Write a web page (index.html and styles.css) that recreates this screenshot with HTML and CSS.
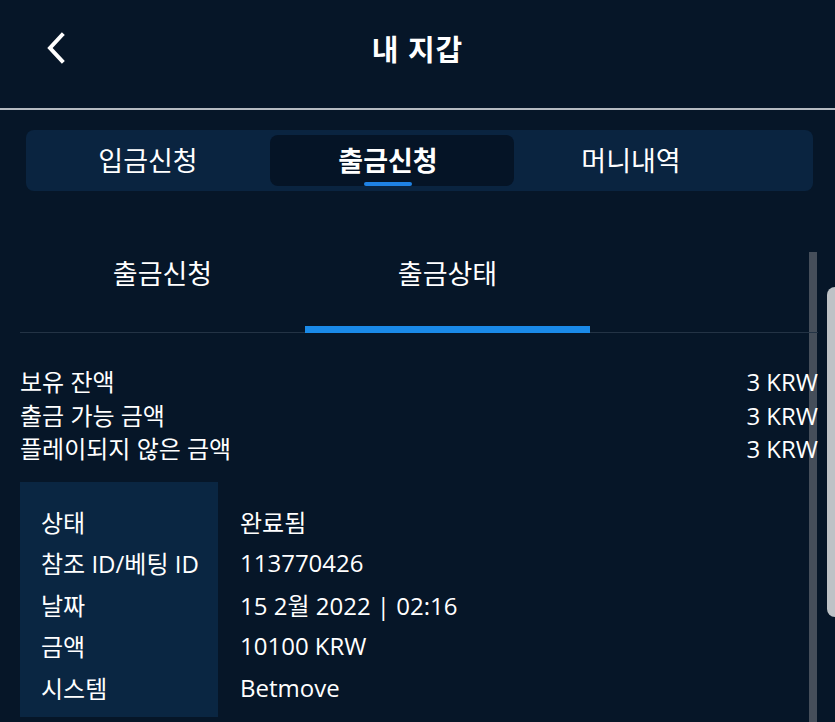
FILE: index.html
```html
<!DOCTYPE html><html><head>
    <meta name="viewport" content="width=device-width, initial-scale=1">
    <title>내 지갑</title>
    <link rel="stylesheet" href="styles.css">
  </head><body>
    <div class="header">
      <a class="back" href="#"><svg width="24" height="32" viewBox="0 0 24 32"><polyline points="18,3 6,16 18,29" fill="none" stroke="#fff" stroke-width="4" stroke-linecap="square"/></svg></a>
      <h1>내 지갑</h1>
    </div>

    <div class="seg">
      <div class="seg-item">입금신청</div>
      <div class="seg-item active">출금신청</div>
      <div class="seg-item">머니내역</div>
    </div>

    <div class="content">
      <div class="subtabs">
        <div class="subtab">출금신청</div>
        <div class="subtab active">출금상태</div>
      </div>

      <div class="balances">
        <div class="bal-row"><span>보유 잔액</span><span>3 KRW</span></div>
        <div class="bal-row"><span>출금 가능 금액</span><span>3 KRW</span></div>
        <div class="bal-row"><span>플레이되지 않은 금액</span><span>3 KRW</span></div>
      </div>

      <table class="detail">
        <tr><th>상태</th><td>완료됨</td></tr>
        <tr><th>참조 ID/베팅 ID</th><td>113770426</td></tr>
        <tr><th>날짜</th><td>15 2월 2022 | 02:16</td></tr>
        <tr><th>금액</th><td>10100 KRW</td></tr>
        <tr><th>시스템</th><td>Betmove</td></tr>
      </table>
    </div>

    <div class="scrollbar"></div>
    <div class="edge-handle"></div>
  </body></html>
```
FILE: styles.css
```css
html, body {margin: 0; padding: 0; background: #061628; color: #fff; height: 100%; overflow: hidden;}
body {font-family: "Open Sans", "Noto Sans CJK KR", sans-serif; position: relative;}

.header {height: 108px; border-bottom: 2px solid #b4bac1; display: flex; align-items: center; justify-content: center; position: relative;}
.header h1 {margin: 0; font-size: 29px; font-weight: 700; letter-spacing: 1px; margin-top: -12px;}
.back {position: absolute; left: 44px; top: 32px; display: block; line-height: 0;}

.seg {margin: 20px 22px 0 26px; height: 61px; background: #0a2440; border-radius: 8px; display: flex; align-items: stretch;}
.seg-item {width: 244px; display: flex; align-items: center; justify-content: center; font-size: 27px; position: relative; padding-bottom: 2px;}
.seg-item:last-child {width: 234px;}
.seg-item.active {background: #051426; border-radius: 8px; margin: 5px 0; font-weight: 700; padding-right: 8px; box-sizing: border-box;}
.seg-item.active:after {content: ""; position: absolute; bottom: 0; left: 94px; width: 48px; height: 4px; border-radius: 2px; background: #1f82e4;}

.content {padding: 0 17px 0 20px; position: relative; z-index: 1;}

.subtabs {display: flex; margin-top: 41px; height: 100px; border-bottom: 1px solid #233345;}
.subtab {width: 285px; display: flex; align-items: center; justify-content: center; font-size: 27px; position: relative; padding-bottom: 20px; box-sizing: border-box;}
.subtab.active:after {content: ""; position: absolute; left: 0; right: 0; bottom: -1px; height: 7px; background: #1a8ae8;}

.balances {margin-top: 32px;}
.bal-row {display: flex; justify-content: space-between; font-size: 24px; height: 33.5px; line-height: 33.5px;}

.detail {margin-top: 16px; border-collapse: collapse; font-size: 24px;}
.detail th {background: #0a2642; font-weight: 400; text-align: left; width: 198px; box-sizing: border-box; padding: 0 0 0 21px; height: 41.5px; white-space: nowrap;}
.detail td {padding: 0 0 0 22px; height: 41.5px; white-space: nowrap;}
.detail tr:first-child th, .detail tr:first-child td {padding-top: 19px;}
.detail tr:last-child th, .detail tr:last-child td {padding-bottom: 9px;}

.scrollbar {position: absolute; left: 809px; top: 252px; bottom: 0; width: 8px; background: #454e5a;}
.edge-handle {position: absolute; left: 827px; top: 287px; width: 8px; height: 330px; background: #bec2c6; border-radius: 9px 0 0 9px; z-index: 2;}
```
